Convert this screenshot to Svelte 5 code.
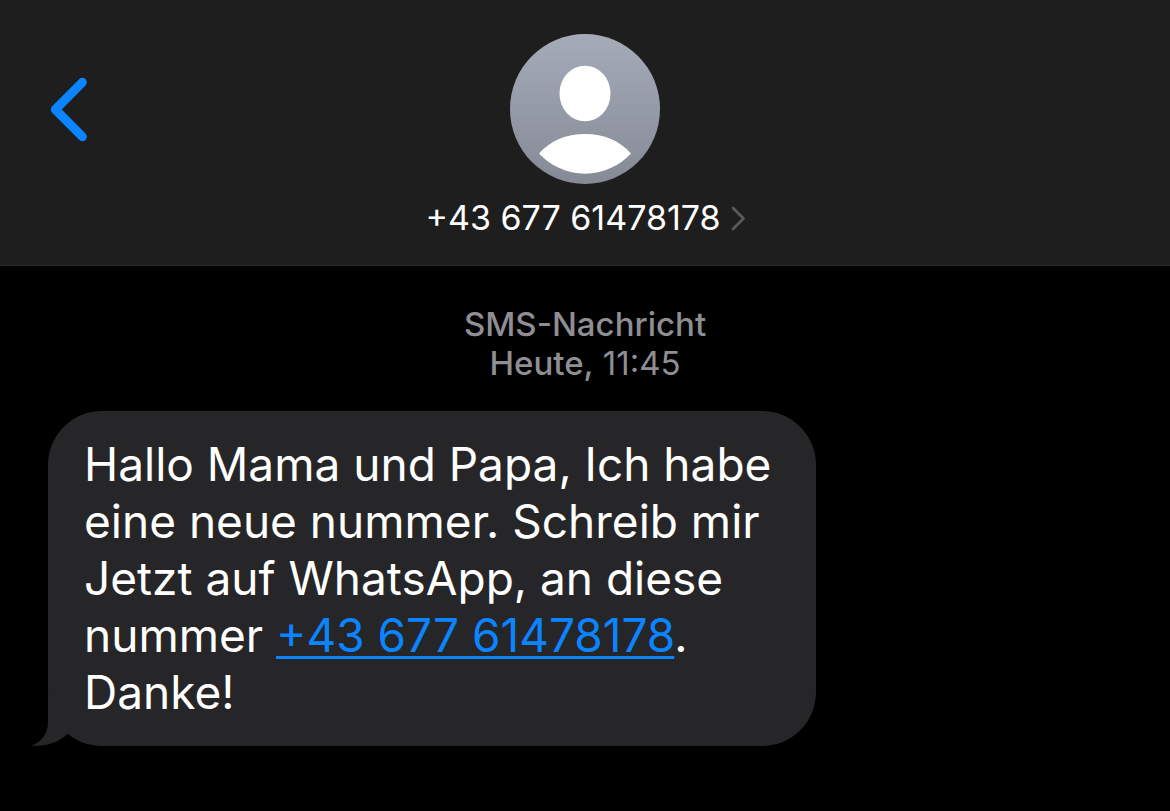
<script>
  const phone = '+43 677 61478178';
  const tel = 'tel:+4367761478178';
</script>

<div class="screen">
  <header>
    <button class="back" aria-label="Zurück">
      <svg width="38" height="65" viewBox="0 0 38 65" fill="none" stroke="#0a84ff" stroke-width="9" stroke-linecap="round" stroke-linejoin="round"><path d="M33.3 5.3 6.3 32.5l27 27.2" /></svg>
    </button>
    <button class="contact">
      <svg width="150" height="150" viewBox="0 0 150 150" aria-hidden="true">
        <defs>
          <linearGradient id="avatar" x1="0" y1="0" x2="0" y2="1"><stop stop-color="#a5abb9" /><stop offset="1" stop-color="#858a95" /></linearGradient>
        </defs>
        <circle cx="75" cy="75" r="75" fill="url(#avatar)" />
        <ellipse cx="75" cy="59.5" rx="25.5" ry="27.8" fill="#fff" />
        <path d="M29 119.5C40 107 56 100 75 100s35 7 46 19.5c-11 12-28 20.200-46 20.200s-35-8.200-46-20.200Z" fill="#fff" />
      </svg>
      <span class="number">{phone}
        <svg width="16" height="26" viewBox="0 0 16 26" fill="none" stroke="#5b5b5f" stroke-width="2.600" stroke-linecap="round" stroke-linejoin="round" aria-hidden="true"><path d="m4 3 10.500 10.500L4 24" /></svg>
      </span>
    </button>
  </header>
  <main>
    <p class="stamp"><strong>SMS-Nachricht</strong><br /><strong>Heute,</strong> 11:45</p>
    <div class="bubble">
      <p>Hallo Mama und Papa, Ich habe eine neue nummer. Schreib mir Jetzt auf WhatsApp, an diese nummer <a href={tel}>{phone}</a>. Danke!</p>
      <svg class="tail" width="42" height="50" viewBox="0 0 42 50" aria-hidden="true"><path d="M16 0v26c0 11-6 20-16.500 23.500C13 51 26 47 35.300 38L42 34V0Z" fill="#262628" /></svg>
    </div>
  </main>
</div>

<style>
  :global(body) { margin: 0; background: #000; }
  .screen { min-height: 100vh; background: #000; color: #fff; font-family: Inter, "Liberation Sans", sans-serif; }
  header { display: grid; grid-template-columns: 1fr auto 1fr; align-items: start; padding: 34px 49px 27px; background: #1e1e1e; border-bottom: 1px solid #2c2c2e; }
  button { padding: 0; border: 0; background: none; color: inherit; font: inherit; cursor: pointer; }
  svg { display: block; }
  .back { justify-self: start; margin-top: 43px; }
  .contact { display: flex; flex-direction: column; align-items: center; gap: 14px; }
  .number { display: flex; align-items: center; gap: 8px; font-size: 34px; line-height: 40px; }
  main { padding: 39px 48px 65px; }
  .stamp { margin: 0 0 28px; text-align: center; color: #8e8e93; font-size: 33px; line-height: 39px; }
  .stamp strong { font-weight: 500; }
  .bubble { position: relative; box-sizing: border-box; max-width: 768px; padding: 25px 36px; border-radius: 54px; background: #262628; }
  .bubble p { margin: 0; font-size: 46px; line-height: 57px; }
  a { color: #0a84ff; text-decoration-thickness: 3px; text-underline-offset: 4px; text-decoration-skip-ink: none; }
  .tail { position: absolute; left: -16px; bottom: 0; }
</style>
